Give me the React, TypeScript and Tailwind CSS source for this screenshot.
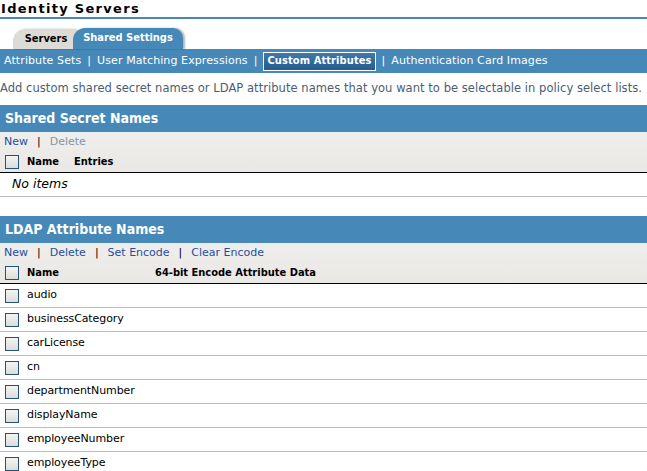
const font = { fontFamily: '"DejaVu Sans", Verdana, sans-serif' };
const bold = { fontFamily: '"DejaVu Sans Condensed", "DejaVu Sans", Verdana, sans-serif' };

const ldapNames = [
  "audio",
  "businessCategory",
  "carLicense",
  "cn",
  "departmentNumber",
  "displayName",
  "employeeNumber",
  "employeeType",
];

function Checkbox() {
  return (
    <span className="inline-block w-[14px] h-[14px] border border-[#24527f] bg-gradient-to-b from-[#f4f4f2] to-[#dcdcd8] shrink-0" />
  );
}

function Sep() {
  return <span className="px-[9px] text-black">|</span>;
}

function NavSep() {
  return <span className="px-[6px]">|</span>;
}

function SectionHeader({ title }: { title: string }) {
  return (
    <div className="h-[27px] bg-[#4689b8] flex items-center px-[5px] text-white font-bold text-[14px]" style={bold}>
      {title}
    </div>
  );
}

export default function App() {
  return (
    <div className="w-[647px] h-[471px] overflow-hidden bg-white text-[11px] text-black" style={font}>
      {/* page title */}
      <div className="h-[17px] flex items-end pl-[1px] font-bold text-[13px] tracking-[1.3px] leading-[17px]">
        Identity Servers
      </div>
      <div className="h-[2px] bg-[#4a86b8]" />

      {/* tabs */}
      <div className="mt-[9px] h-[21px] flex items-end pl-[13px]" style={bold}>
        <div className="h-[20px] w-[66px] bg-[#dddbd6] rounded-tl-[12px] rounded-tr-[8px] flex items-center justify-center font-bold text-[11px] text-black shadow-[2px_0_2px_rgba(0,0,0,0.25)]">
          Servers
        </div>
        <div className="-ml-[6px] h-[21px] w-[110px] bg-[#4689b8] rounded-tl-[12px] rounded-tr-[10px] flex items-center justify-center font-bold text-[11px] text-white shadow-[2px_0_2px_rgba(0,0,0,0.3)] relative">
          Shared Settings
        </div>
      </div>

      {/* sub navigation */}
      <div className="h-[24px] bg-[#4689b8] flex items-center pl-[4px] text-white text-[11px] tracking-[0.1px]">
        <span>Attribute Sets</span>
        <NavSep />
        <span>User Matching Expressions</span>
        <NavSep />
        <span className="border border-white bg-gradient-to-b from-[#3f78aa] to-[#255b90] px-[3px] h-[19px] flex items-center font-bold" style={bold}>
          Custom Attributes
        </span>
        <NavSep />
        <span>Authentication Card Images</span>
      </div>

      {/* description */}
      <div className="h-[32px] flex items-center text-[#4a5d74] text-[11.5px] tracking-[0.05px] whitespace-nowrap">
        Add custom shared secret names or LDAP attribute names that you want to be selectable in policy select lists.
      </div>

      {/* Shared Secret Names */}
      <SectionHeader title="Shared Secret Names" />
      <div className="h-[41px] bg-gradient-to-b from-[#efeeec] to-[#e9e8e5] border-b border-black">
        <div className="h-[20px] flex items-center pl-[4px] pt-[1px]">
          <span className="text-[#1f4fa0]">New</span>
          <Sep />
          <span className="text-[#8795a3]">Delete</span>
        </div>
        <div className="h-[20px] flex items-center pl-[5px] font-bold" style={bold}>
          <Checkbox />
          <span className="ml-[8px]">Name</span>
          <span className="ml-[15px]">Entries</span>
        </div>
      </div>
      <div className="h-[24px] flex items-center pl-[12px] italic text-[12.5px] border-b border-[#bdbdbd]">
        No items
      </div>

      <div className="h-[19px]" />

      {/* LDAP Attribute Names */}
      <SectionHeader title="LDAP Attribute Names" />
      <div className="h-[41px] bg-gradient-to-b from-[#efeeec] to-[#e9e8e5] border-b border-black">
        <div className="h-[20px] flex items-center pl-[4px] pt-[1px] text-[#1f4fa0]">
          <span>New</span>
          <Sep />
          <span>Delete</span>
          <Sep />
          <span>Set Encode</span>
          <Sep />
          <span>Clear Encode</span>
        </div>
        <div className="h-[20px] flex items-center pl-[5px] font-bold" style={bold}>
          <Checkbox />
          <span className="ml-[8px] w-[128px]">Name</span>
          <span>64-bit Encode Attribute Data</span>
        </div>
      </div>
      {ldapNames.map((n) => (
        <div key={n} className="h-[24px] flex items-center pl-[5px] border-b border-[#bdbdbd]">
          <Checkbox />
          <span className="ml-[8px] tracking-[-0.1px]">{n}</span>
        </div>
      ))}
    </div>
  );
}
